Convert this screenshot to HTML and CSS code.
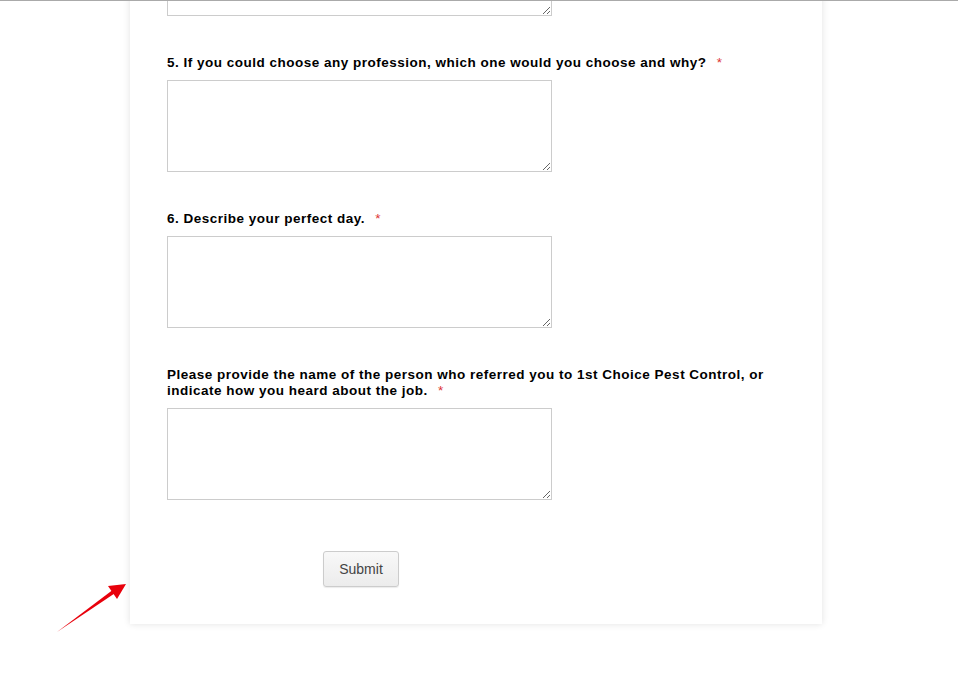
FILE: index.html
```html
<!DOCTYPE html>
<html lang="en">
<head>
  <meta charset="UTF-8">
  <title>Application Form</title>
  <link rel="stylesheet" href="styles.css">
</head>
<body>
  <form class="form-card" id="applicationForm">
    <div class="question">
      <textarea name="q4"></textarea>
    </div>

    <div class="question">
      <label for="q5">5. If you could choose any profession, which one would you choose and why? <span class="req">*</span></label>
      <textarea id="q5" name="q5"></textarea>
    </div>

    <div class="question">
      <label for="q6">6. Describe your perfect day. <span class="req">*</span></label>
      <textarea id="q6" name="q6"></textarea>
    </div>

    <div class="question">
      <label for="q7">Please provide the name of the person who referred you to 1st Choice Pest Control, or indicate how you heard about the job. <span class="req">*</span></label>
      <textarea id="q7" name="q7"></textarea>
    </div>

    <div class="buttons">
      <button type="submit">Submit</button>
    </div>
  </form>

  <svg class="pointer" width="80" height="60" viewBox="0 0 80 60">
    <polygon points="2,57 57,15.5 59.5,18.5" fill="#e8000b"/>
    <polygon points="71,9 53,11 62,24" fill="#e8000b"/>
  </svg>
</body>
</html>
```

FILE: styles.css
```css
body {
  margin: 0;
  border-top: 1px solid #aaa;
  background: #fff;
  font-family: "Liberation Sans", Arial, sans-serif;
  position: relative;
  min-height: 682px;
  overflow: hidden;
}
.form-card {
  width: 618px;
  margin: -77px 0 0 130px;
  padding: 0 37px 37px 37px;
  background: #fff;
  box-shadow: 0 0 7px rgba(0, 0, 0, 0.12);
}
.question { margin-bottom: 39px; }
.question label {
  display: block;
  font-size: 13.5px;
  font-weight: bold;
  line-height: 16px;
  color: #000;
  margin-bottom: 9px;
  letter-spacing: 0.5px;
}
.req { color: #d33; font-weight: normal; margin-left: 6px; }
textarea {
  display: block;
  box-sizing: border-box;
  width: 385px;
  height: 92px;
  margin: 0;
  border: 1px solid #ccc;
  padding: 4px;
  font-family: "Liberation Sans", Arial, sans-serif;
}
.buttons { padding: 12px 0 0 156px; }
button {
  width: 76px;
  height: 36px;
  font-family: "Liberation Sans", Arial, sans-serif;
  font-size: 14px;
  color: #444;
  background: linear-gradient(#f8f8f8, #ececec);
  border: 1px solid #ccc;
  border-radius: 3px;
  box-shadow: 0 1px 1px rgba(0, 0, 0, 0.08);
}
.pointer { position: absolute; left: 55px; top: 574px; }
```
